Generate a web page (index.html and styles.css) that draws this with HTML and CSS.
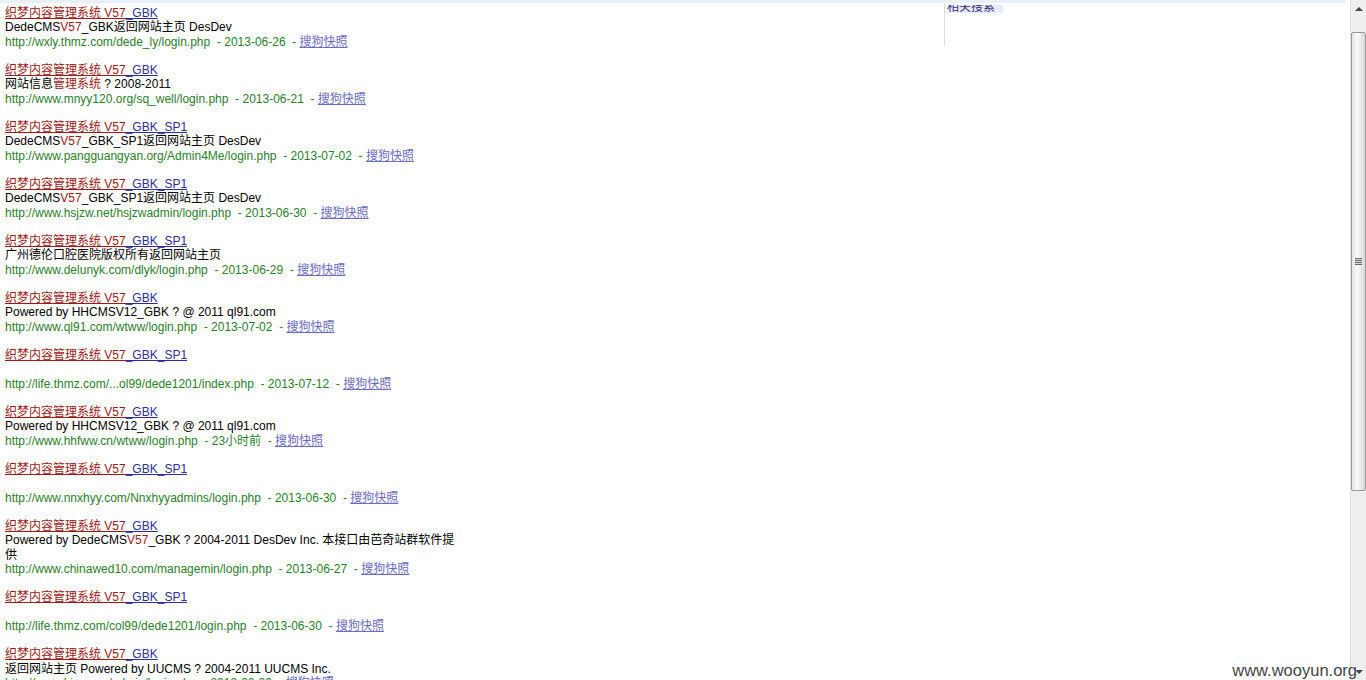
FILE: index.html
```html
<!DOCTYPE html>
<html lang="zh-CN">
<head>
<meta charset="utf-8">
<title>搜狗搜索结果</title>
<link rel="stylesheet" href="styles.css">
</head>
<body>
<div class="page">
  <div class="viewport">
    <div class="topstrip"></div>
    <div class="layout">
      <div class="results">
        <div class="item">
          <a class="title" href="#"><em>织梦内容管理系统 V57</em>_GBK</a>
          <div class="desc">DedeCMS<em>V57</em>_GBK返回网站主页 DesDev</div>
          <div class="url">http://wxly.thmz.com/dede_ly/login.php&nbsp; - 2013-06-26&nbsp; - <a class="snap" href="#">搜狗快照</a></div>
        </div>
        <div class="item">
          <a class="title" href="#"><em>织梦内容管理系统 V57</em>_GBK</a>
          <div class="desc">网站信息<em>管理系统</em> ? 2008-2011</div>
          <div class="url">http://www.mnyy120.org/sq_well/login.php&nbsp; - 2013-06-21&nbsp; - <a class="snap" href="#">搜狗快照</a></div>
        </div>
        <div class="item">
          <a class="title" href="#"><em>织梦内容管理系统 V57</em>_GBK_SP1</a>
          <div class="desc">DedeCMS<em>V57</em>_GBK_SP1返回网站主页 DesDev</div>
          <div class="url">http://www.pangguangyan.org/Admin4Me/login.php&nbsp; - 2013-07-02&nbsp; - <a class="snap" href="#">搜狗快照</a></div>
        </div>
        <div class="item">
          <a class="title" href="#"><em>织梦内容管理系统 V57</em>_GBK_SP1</a>
          <div class="desc">DedeCMS<em>V57</em>_GBK_SP1返回网站主页 DesDev</div>
          <div class="url">http://www.hsjzw.net/hsjzwadmin/login.php&nbsp; - 2013-06-30&nbsp; - <a class="snap" href="#">搜狗快照</a></div>
        </div>
        <div class="item">
          <a class="title" href="#"><em>织梦内容管理系统 V57</em>_GBK_SP1</a>
          <div class="desc">广州德伦口腔医院版权所有返回网站主页</div>
          <div class="url">http://www.delunyk.com/dlyk/login.php&nbsp; - 2013-06-29&nbsp; - <a class="snap" href="#">搜狗快照</a></div>
        </div>
        <div class="item">
          <a class="title" href="#"><em>织梦内容管理系统 V57</em>_GBK</a>
          <div class="desc">Powered by HHCMSV12_GBK ? @ 2011 ql91.com</div>
          <div class="url">http://www.ql91.com/wtww/login.php&nbsp; - 2013-07-02&nbsp; - <a class="snap" href="#">搜狗快照</a></div>
        </div>
        <div class="item">
          <a class="title" href="#"><em>织梦内容管理系统 V57</em>_GBK_SP1</a>
          <div class="desc"></div>
          <div class="url">http://life.thmz.com/...ol99/dede1201/index.php&nbsp; - 2013-07-12&nbsp; - <a class="snap" href="#">搜狗快照</a></div>
        </div>
        <div class="item">
          <a class="title" href="#"><em>织梦内容管理系统 V57</em>_GBK</a>
          <div class="desc">Powered by HHCMSV12_GBK ? @ 2011 ql91.com</div>
          <div class="url">http://www.hhfww.cn/wtww/login.php&nbsp; - 23小时前&nbsp; - <a class="snap" href="#">搜狗快照</a></div>
        </div>
        <div class="item">
          <a class="title" href="#"><em>织梦内容管理系统 V57</em>_GBK_SP1</a>
          <div class="desc"></div>
          <div class="url">http://www.nnxhyy.com/Nnxhyyadmins/login.php&nbsp; - 2013-06-30&nbsp; - <a class="snap" href="#">搜狗快照</a></div>
        </div>
        <div class="item">
          <a class="title" href="#"><em>织梦内容管理系统 V57</em>_GBK</a>
          <div class="desc">Powered by DedeCMS<em>V57</em>_GBK ? 2004-2011 DesDev Inc. 本接口由芭奇站群软件提供</div>
          <div class="url">http://www.chinawed10.com/managemin/login.php&nbsp; - 2013-06-27&nbsp; - <a class="snap" href="#">搜狗快照</a></div>
        </div>
        <div class="item">
          <a class="title" href="#"><em>织梦内容管理系统 V57</em>_GBK_SP1</a>
          <div class="desc"></div>
          <div class="url">http://life.thmz.com/col99/dede1201/login.php&nbsp; - 2013-06-30&nbsp; - <a class="snap" href="#">搜狗快照</a></div>
        </div>
        <div class="item">
          <a class="title" href="#"><em>织梦内容管理系统 V57</em>_GBK</a>
          <div class="desc">返回网站主页 Powered by UUCMS ? 2004-2011 UUCMS Inc.</div>
          <div class="url">http://www.hiyou.cn/admin/login.php&nbsp; - 2013-06-29&nbsp; - <a class="snap" href="#">搜狗快照</a></div>
        </div>
      </div>
      <div class="sidebar">
        <div class="side-head"><span class="side-text">相关搜索</span></div>
      </div>
    </div>
  </div>
  <div class="scrollbar">
    <div class="sb-btn sb-up"><span class="arrow-up"></span></div>
    <div class="sb-thumb"><span class="grip"></span></div>
    <div class="sb-track"></div>
    <div class="sb-btn sb-down"><span class="arrow-down"></span></div>
  </div>
  <div class="watermark">www.wooyun.org</div>
</div>
</body>
</html>
```
FILE: styles.css
```css
* { box-sizing: border-box; }
html, body {
  margin: 0;
  padding: 0;
  height: 680px;
  overflow: hidden;
  background: #fff;
}
body {
  font-family: "Liberation Sans", "Noto Sans CJK SC", sans-serif;
  font-size: 12px;
  line-height: 14.25px;
  color: #000;
}
.page {
  position: relative;
  display: flex;
  height: 680px;
}
.viewport {
  flex: 1;
  overflow: hidden;
}
.topstrip {
  height: 3px;
  background: #e8f0fa;
  margin-right: 4px;
}
.layout {
  display: grid;
  grid-template-columns: 944px 1fr;
}
.results {
  padding: 3px 0 0 5px;
  width: 465px;
}
.item {
  margin-bottom: 14.25px;
}
.title {
  display: block;
  color: #2d2d9f;
  text-decoration: underline;
}
.title em {
  font-style: normal;
  color: #a01818;
  text-decoration: underline;
}
.desc {
  min-height: 14.25px;
}
.desc em {
  font-style: normal;
  color: #a01818;
}
.url {
  color: #2a802a;
}
.snap {
  color: #6a6ac8;
  text-decoration: underline;
}
.sidebar {
  height: 43px;
  border-left: 1px solid #dcdcdc;
  padding: 2px 0 0 2px;
}
.side-head {
  width: 56px;
  height: 8px;
  overflow: hidden;
  background: #e6edf8;
}
.side-text {
  display: block;
  margin-top: -5px;
  color: #3a2d7a;
  font-size: 12px;
  line-height: 14px;
}
.scrollbar {
  width: 16px;
  display: flex;
  flex-direction: column;
  background: #eeeeee;
  border-left: 1px solid #e2e2e2;
}
.sb-btn {
  height: 31px;
  display: flex;
  justify-content: center;
  background: #efefef;
}
.sb-up { align-items: flex-start; padding-top: 7px; }
.sb-down { height: 17px; align-items: center; }
.arrow-up {
  width: 0;
  height: 0;
  border-left: 4px solid transparent;
  border-right: 4px solid transparent;
  border-bottom: 4px solid #444;
}
.arrow-down {
  width: 0;
  height: 0;
  border-left: 4px solid transparent;
  border-right: 4px solid transparent;
  border-top: 4px solid #444;
}
.sb-thumb {
  height: 459px;
  margin: 1px 0 0 0;
  border: 1px solid #9a9a9a;
  border-radius: 2px;
  background: linear-gradient(to right, #e4e4e4, #fafafa 40%, #d8d8d8);
  display: flex;
  align-items: center;
  justify-content: center;
}
.grip {
  width: 7px;
  height: 7px;
  background: repeating-linear-gradient(to bottom, #666 0, #666 1px, #ddd 1px, #ddd 2px);
}
.sb-track {
  flex: 1;
}
.watermark {
  position: absolute;
  right: 9px;
  bottom: 0;
  font-family: "Liberation Sans", sans-serif;
  font-size: 16.5px;
  line-height: 20px;
  color: #444;
  text-shadow: 0 0 2px #fff;
}
```
